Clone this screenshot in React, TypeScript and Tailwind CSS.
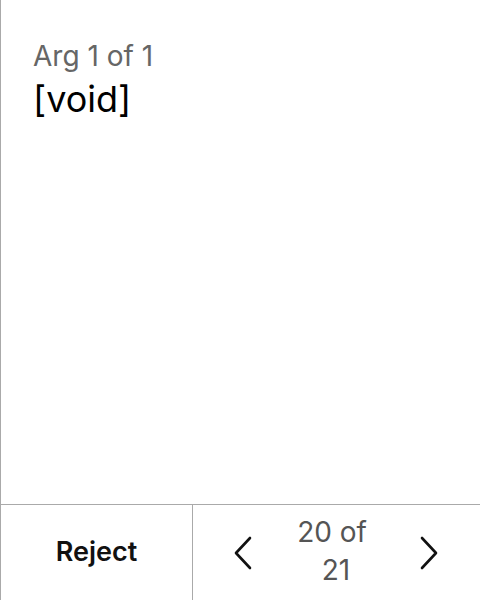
import React from 'react';

const Chevron = ({ dir }: { dir: 'left' | 'right' }) => (
  <svg width="18" height="34" viewBox="0 0 18 34" fill="none">
    <path
      d={dir === 'left' ? 'M16 2 L2 17 L16 32' : 'M2 2 L16 17 L2 32'}
      stroke="#111"
      strokeWidth="2.6"
      strokeLinecap="round"
      strokeLinejoin="round"
    />
  </svg>
);

export default function App() {
  return (
    <div className="w-[480px] h-[600px] flex flex-col bg-white border-l border-[#aaaaaa] font-['Inter',sans-serif]">
      <div className="flex-1 px-8 pt-[39px]">
        <div className="text-[28px] leading-[34px] text-[#666666]">Arg 1 of 1</div>
        <div className="mt-1 text-[36px] leading-[44px] text-black">[void]</div>
      </div>
      <div className="h-[96px] flex border-t border-[#aaaaaa]">
        <button className="w-[192px] flex items-center justify-center border-r border-[#aaaaaa] text-[27px] font-semibold text-[#111111]">
          Reject
        </button>
        <div className="flex-1 flex items-center justify-between pl-[41px] pr-[42px]">
          <Chevron dir="left" />
          <div className="mb-1 text-[28px] leading-[38px] text-[#555555] text-center">
            20 of&nbsp;
            <br />
            21
          </div>
          <Chevron dir="right" />
        </div>
      </div>
    </div>
  );
}
